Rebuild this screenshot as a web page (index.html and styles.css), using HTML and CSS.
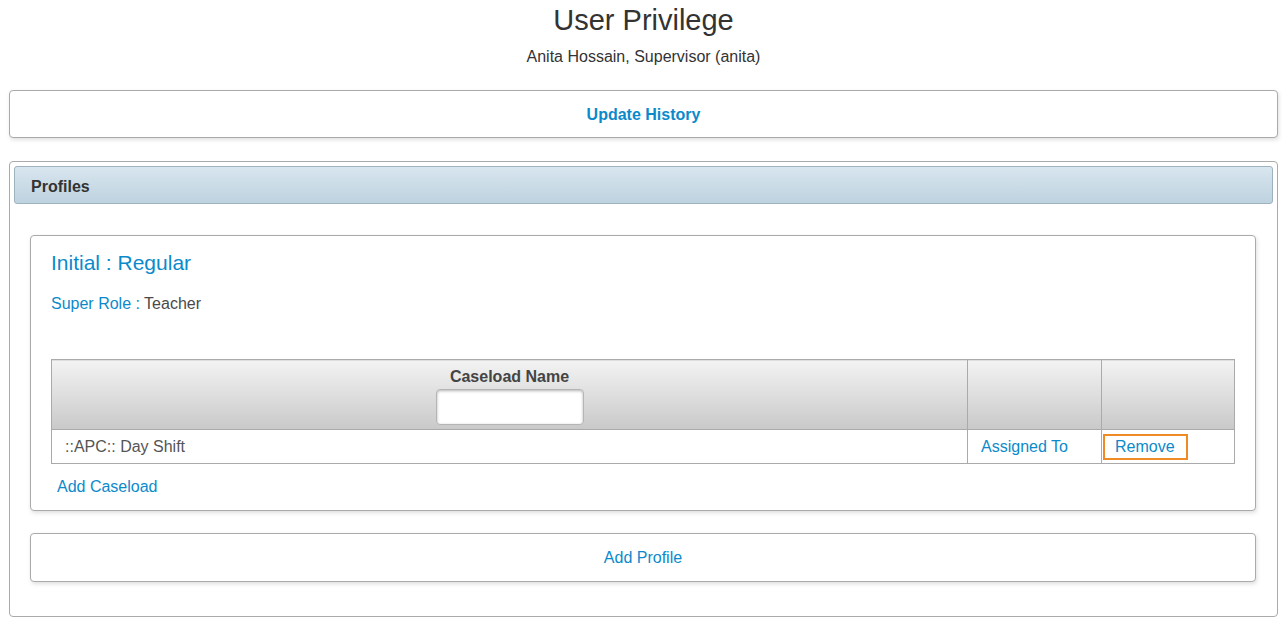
FILE: index.html
```html
<!DOCTYPE html>
<html>
<head>
<meta charset="utf-8">
<title>User Privilege</title>
<link rel="stylesheet" href="styles.css">
</head>
<body>
<div class="page">
  <h1 class="title">User Privilege</h1>
  <div class="subtitle">Anita Hossain, Supervisor (anita)</div>

  <div class="box history-box">
    <a class="link strong" href="#">Update History</a>
  </div>

  <div class="box profiles">
    <div class="profiles-header">Profiles</div>

    <div class="card profile-card">
      <div class="profile-name">Initial : Regular</div>
      <div class="super-role"><span class="label">Super Role :</span> Teacher</div>

      <table class="caseloads">
        <colgroup>
          <col>
          <col class="col-assigned">
          <col class="col-remove">
        </colgroup>
        <thead>
          <tr>
            <th>
              <div class="th-label">Caseload Name</div>
              <input class="filter" type="text">
            </th>
            <th></th>
            <th></th>
          </tr>
        </thead>
        <tbody>
          <tr>
            <td class="name-cell">::APC:: Day Shift</td>
            <td class="link-cell"><a class="link" href="#">Assigned To</a></td>
            <td class="remove-cell"><a class="link remove" href="#">Remove</a></td>
          </tr>
        </tbody>
      </table>

      <a class="link add-caseload" href="#">Add Caseload</a>
    </div>

    <div class="card add-profile">
      <a class="link" href="#">Add Profile</a>
    </div>
  </div>
</div>
</body>
</html>
```

FILE: styles.css
```css
* {
  box-sizing: border-box;
}

html, body {
  margin: 0;
  padding: 0;
  background: #fff;
}

body {
  font-family: "Liberation Sans", Arial, sans-serif;
  font-size: 16px;
  line-height: 20px;
  color: #333;
}

.page {
  padding: 0 7px 0 9px;
}

.title {
  margin: 0;
  padding-top: 2px;
  font-size: 29px;
  line-height: 36px;
  font-weight: normal;
  text-align: center;
  color: #333;
}

.subtitle {
  margin-top: 9px;
  text-align: center;
  font-size: 16px;
  line-height: 20px;
  color: #333;
}

.link {
  color: #0b8acb;
  text-decoration: none;
}

.strong {
  font-weight: bold;
}

.box {
  border: 1px solid #aaa;
  border-radius: 4px;
  background: #fff;
  box-shadow: 1px 2px 4px rgba(0, 0, 0, 0.12);
}

.history-box {
  margin-top: 23px;
  height: 48px;
  padding-top: 1px;
  line-height: 46px;
  text-align: center;
}

.profiles {
  margin-top: 23px;
  padding: 4px;
  box-shadow: none;
}

.profiles-header {
  height: 38px;
  line-height: 36px;
  padding-top: 2px;
  padding-left: 16px;
  border: 1px solid #9fb2c0;
  border-radius: 3px;
  background: linear-gradient(#d8e6ef, #bed2df);
  font-weight: bold;
  color: #333;
}

.card {
  border: 1px solid #aaa;
  border-radius: 4px;
  background: #fff;
  box-shadow: 1px 2px 4px rgba(0, 0, 0, 0.13);
  margin-left: 16px;
  margin-right: 17px;
}

.profile-card {
  margin-top: 31px;
  padding: 15px 20px 13px;
}

.profile-name {
  font-size: 21px;
  line-height: 24px;
  color: #0b8acb;
}

.super-role {
  margin-top: 19px;
  color: #4a4a4a;
}

.super-role .label {
  color: #0b8acb;
}

.caseloads {
  margin-top: 45px;
  width: 100%;
  border-collapse: collapse;
  table-layout: fixed;
  border: 1px solid #aaa;
}

.col-assigned {
  width: 134px;
}

.col-remove {
  width: 133px;
}

.caseloads th {
  border: 1px solid #aaa;
  padding: 7px 8px 4px;
  background: linear-gradient(#f3f3f3, #c9c9c9);
  vertical-align: top;
  font-weight: bold;
  color: #444;
  text-align: center;
}

.th-label {
  line-height: 20px;
}

.filter {
  display: block;
  margin: 2px auto 0;
  width: 148px;
  height: 36px;
  border: 1px solid #b5b5b5;
  border-radius: 4px;
  background: #fff;
  box-shadow: inset 0 1px 3px rgba(0, 0, 0, 0.3);
  font-family: inherit;
  font-size: 16px;
  padding: 0 6px;
}

.caseloads td {
  border: 1px solid #aaa;
  height: 34px;
  padding: 0 13px;
  vertical-align: middle;
}

.name-cell {
  color: #555;
}

.caseloads td.remove-cell {
  padding: 0 1px;
}

.remove {
  display: inline-block;
  padding: 1px 11px 1px 10px;
  border: 2px solid #f08a24;
  line-height: 20px;
}

.add-caseload {
  display: inline-block;
  margin-top: 13px;
  margin-left: 6px;
}

.add-profile {
  margin-top: 22px;
  margin-bottom: 30px;
  height: 49px;
  line-height: 47px;
  text-align: center;
}
```
